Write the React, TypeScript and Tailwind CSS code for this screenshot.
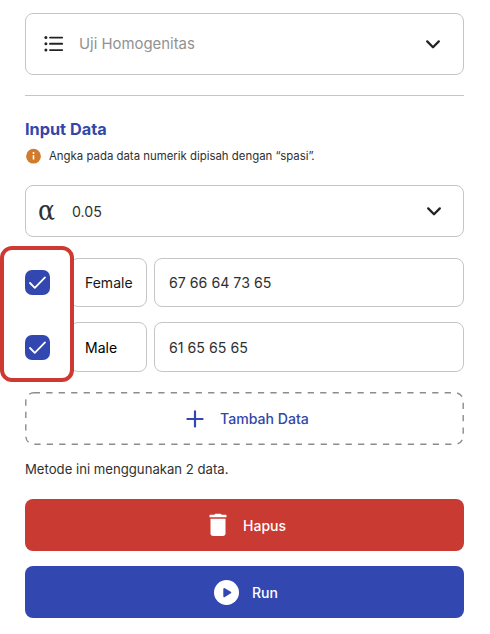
import type { ReactNode } from "react";

function Chevron() {
  return (
    <svg width="16" height="10" viewBox="0 0 16 10" fill="none" stroke="#242426" strokeWidth="2.3" strokeLinecap="round" strokeLinejoin="round">
      <path d="M2.2 2.4 8 8.2 13.8 2.4" />
    </svg>
  );
}

function ListIcon() {
  return (
    <svg width="20" height="18" viewBox="0 0 20 18" stroke="#242426" strokeWidth="1.9" strokeLinecap="round">
      <path d="M6 2.6H18.2M6 8.8H18.2M6 15.1H18.2" />
      <g fill="#242426" stroke="none">
        <circle cx="1.9" cy="2.6" r="1.5" />
        <circle cx="1.9" cy="8.8" r="1.5" />
        <circle cx="1.9" cy="15.1" r="1.5" />
      </g>
    </svg>
  );
}

function Checkbox() {
  return (
    <span className="flex size-[25px] items-center justify-center rounded-[7px] bg-[#3247b0]">
      <svg width="19" height="15" viewBox="0 0 19 15" fill="none" stroke="#fff" strokeWidth="1.8" strokeLinecap="round" strokeLinejoin="round">
        <path d="M2 8 6.8 12.8 17 2.4" />
      </svg>
    </span>
  );
}

function Field({ className, children }: { className: string; children: ReactNode }) {
  return <div className={"flex items-center rounded-lg border border-[#c5c5c5] bg-white " + className}>{children}</div>;
}

export default function App() {
  return (
    <main className="relative h-[634px] w-[490px] overflow-hidden bg-white pt-[13px] pr-[26px] pl-[25px] font-['Inter',sans-serif] text-[14px] text-[#303030]">
      <Field className="h-[62px] justify-between pr-[22px] pl-[18px]">
        <span className="flex items-center">
          <ListIcon />
          <span className="mt-px ml-[15px] text-[14.9px] text-[#929292]">Uji Homogenitas</span>
        </span>
        <Chevron />
      </Field>

      <hr className="mt-5 border-t border-[#c5c5c5]" />

      <h1 className="mt-[21px] text-[16.3px] leading-6 font-bold text-[#3247a8]">Input Data</h1>
      <p className="mt-[7px] flex h-4 items-center text-[11.4px]">
        <svg className="mr-2" width="16" height="16" viewBox="0 0 16 16">
          <circle cx="8.5" cy="8.2" r="7.4" fill="#d17c2c" />
          <circle cx="8.5" cy="5" r="1" fill="#fff" />
          <path d="M8.5 7.2V11.5" stroke="#fff" strokeWidth="1.6" />
        </svg>
        <span className="pt-0.5">
          Angka pada data numerik dipisah dengan “spasi<span className="tracking-[-2.4px]">”</span>.
        </span>
      </p>

      <Field className="mt-[21px] h-[52px] justify-between pr-[21px] pl-3">
        <span className="flex items-center">
          <span className="w-[34px]">
            <span className="inline-block origin-left scale-x-[.9] font-['DejaVu_Serif',serif] text-[28px] leading-8">α</span>
          </span>
          <span className="pt-0.5 text-[14.2px]">0.05</span>
        </span>
        <Chevron />
      </Field>

      <div className="mt-[21px] flex h-[49px] items-center">
        <Checkbox />
        <Field className="ml-[20px] h-full w-[77px] pl-[14px] text-[#171717]">Female</Field>
        <Field className="ml-[7px] h-full flex-1 pl-[14px] text-[14.2px]">67 66 64 73 65</Field>
      </div>
      <div className="mt-[15px] flex h-[50px] items-center">
        <Checkbox />
        <Field className="ml-[20px] h-full w-[77px] pl-[14px] text-black">Male</Field>
        <Field className="ml-[7px] h-full flex-1 pt-0.5 pl-[14px] text-[14.2px]">61 65 65 65</Field>
      </div>

      <div className="relative mt-5 flex h-[53px] items-center pl-[161px] font-medium text-[#3247a8]">
        <svg className="absolute inset-0" width="439" height="53" fill="none" stroke="#8c8c8c" strokeWidth="1.4">
          <rect x="0.8" y="0.8" width="437.4" height="51.4" rx="8" strokeDasharray="6.25 6.2" />
        </svg>
        <svg width="18" height="18" viewBox="0 0 18 18" stroke="#3247b0" strokeWidth="2.2" strokeLinecap="round">
          <path d="M9 1.4V16.6M1.4 9H16.6" />
        </svg>
        <span className="ml-4 text-[14.1px]">Tambah Data</span>
      </div>

      <p className="mt-[14px] text-[13.15px] leading-5">Metode ini menggunakan 2 data.</p>

      <button className="mt-[20px] flex h-[52px] w-full items-center rounded-lg bg-[#c93a32] pl-[184px] font-medium text-white">
        <svg width="18" height="24" viewBox="0 0 18 24" fill="#fff">
          <path d="M1 1.8H5.2L6.4.7H11.6L12.8 1.8H17Q17.5 1.8 17.5 2.4V4.3H.5V2.4Q.5 1.8 1 1.8Z" />
          <path d="M1.5 5.8H16.5V20.3Q16.5 23 13.8 23H4.2Q1.5 23 1.5 20.3Z" />
        </svg>
        <span className="ml-4">Hapus</span>
      </button>
      <button className="mt-[15px] flex h-[52px] w-full items-center rounded-lg bg-[#3247b0] pl-[189px] font-medium text-white">
        <svg width="25" height="25" viewBox="0 0 25 25">
          <circle cx="12.5" cy="12.5" r="12.5" fill="#fff" />
          <path d="M10.3 9 16.3 12.5 10.3 16.2Z" fill="#3247b0" stroke="#3247b0" strokeWidth="2" strokeLinejoin="round" />
        </svg>
        <span className="ml-[13px]">Run</span>
      </button>

      <div className="absolute top-[246px] left-0 h-[136px] w-[74px] rounded-xl border-4 border-[#cd3a32]" />
    </main>
  );
}
